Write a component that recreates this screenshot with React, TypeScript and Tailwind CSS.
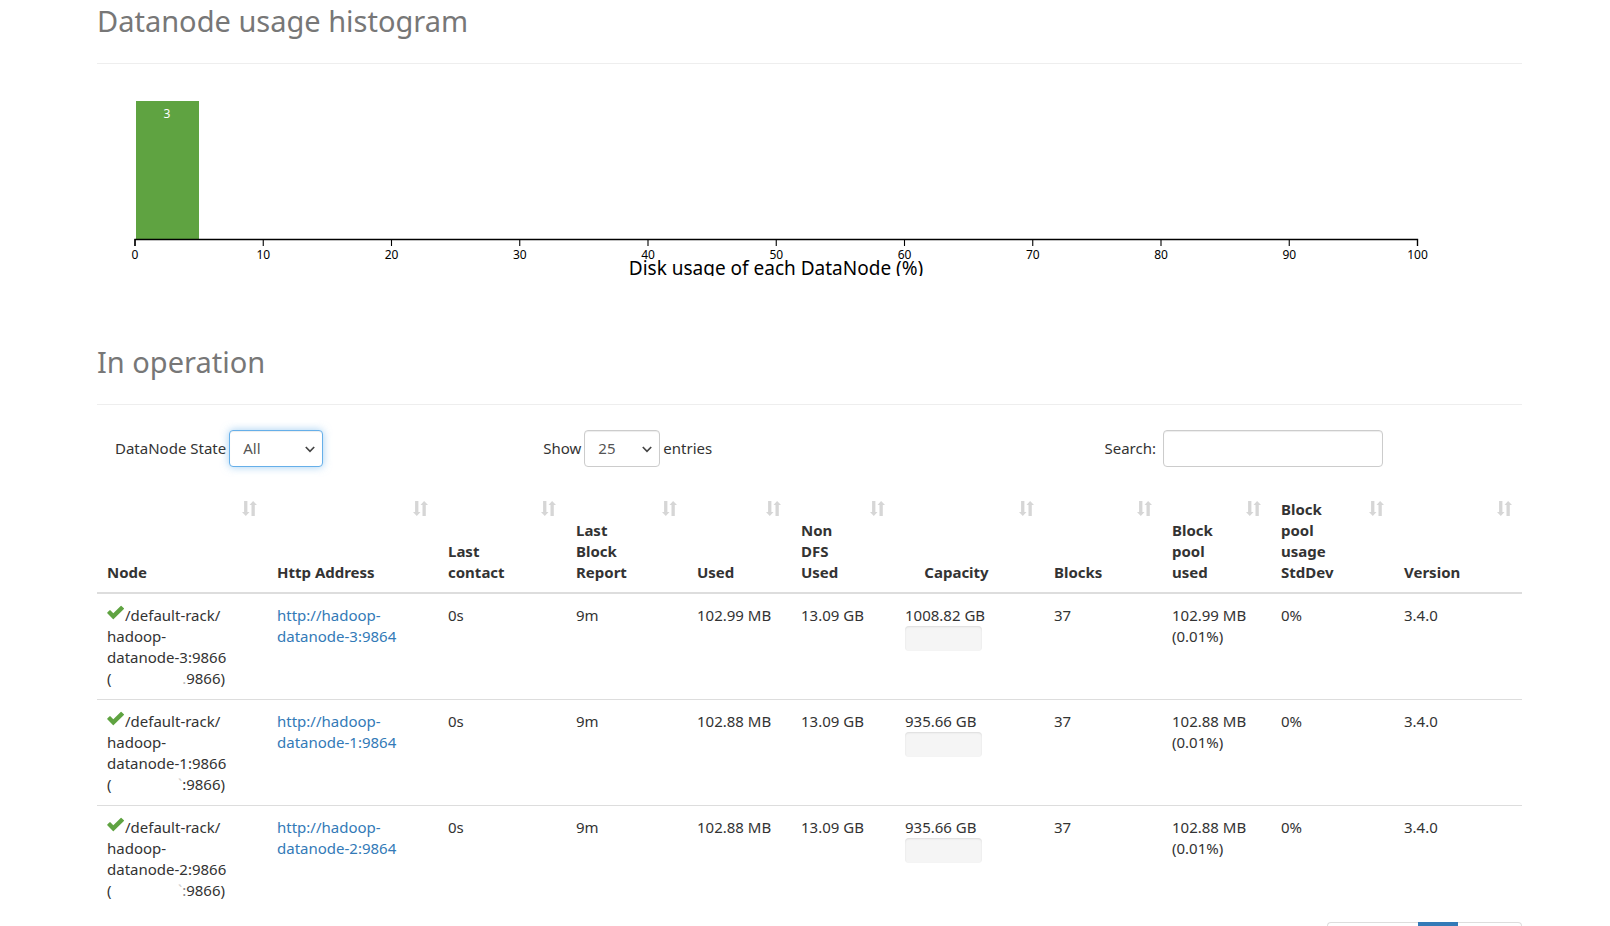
import React from "react";

const ticks = [0, 10, 20, 30, 40, 50, 60, 70, 80, 90, 100];

const columns = [
  { label: "Node", width: "w-[170px]" },
  { label: "Http Address", width: "w-[171px]" },
  { label: "Last contact", width: "w-[128px]" },
  { label: "Last Block Report", width: "w-[121px]" },
  { label: "Used", width: "w-[104px]" },
  { label: "Non DFS Used", width: "w-[104px]" },
  { label: "Capacity", width: "w-[149px]", center: true },
  { label: "Blocks", width: "w-[118px]" },
  { label: "Block pool used", width: "w-[109px]" },
  { label: "Block pool usage StdDev", width: "w-[123px]" },
  { label: "Version", width: "w-[128px]" },
];

const nodes = [
  { id: 3, used: "102.99 MB", capacity: "1008.82 GB", hint: "", sep: ".", sepColor: "text-[#bbbbbb]" },
  { id: 1, used: "102.88 MB", capacity: "935.66 GB", hint: "`", sep: ":", sepColor: "text-[#333333]" },
  { id: 2, used: "102.88 MB", capacity: "935.66 GB", hint: "`", sep: ":", sepColor: "text-[#888888]" },
];

function SortIcon() {
  return (
    <svg className="absolute top-[9px] right-[10px] h-[15px] w-[15px]" viewBox="0 0 15 15" fill="#d6d6d6" aria-hidden="true">
      <path d="M2.1 0h3.3v11h2.1L3.8 15 0 11h2.1zM9.5 15h3.3V4h2.2L11.1 0 7.5 4h2z" />
    </svg>
  );
}

function CheckIcon() {
  return (
    <svg className="-mt-[4px] mb-[4px] inline-block h-[15px] w-[18px]" viewBox="0 0 18 15" fill="#5fa341" aria-hidden="true">
      <path d="M0.3 8.3Q0 7.9 0.3 7.5L2.6 5.3Q3 5 3.4 5.3L6.3 8.2 13.7 0.9Q14.1 0.6 14.5 0.9L16.9 3.2Q17.2 3.6 16.9 4L6.7 14Q6.3 14.4 5.9 14z" />
    </svg>
  );
}

function Heading({ children }: { children: React.ReactNode }) {
  return (
    <h1 className="border-b border-[#eeeeee] pb-[26px] text-[29px] leading-[33px] text-[#777777]">{children}</h1>
  );
}

function Histogram() {
  return (
    <svg className="mt-[36px] block h-[176px] w-[1368px] overflow-hidden" viewBox="0 0 1368 176" role="img" aria-label="Disk usage of each DataNode">
      <rect x="39" y="1" width="63" height="138" fill="#5fa341" />
      <text x="70" y="18" textAnchor="middle" fontSize="12" fill="#ffffff">3</text>
      <path d="M38 146V139.5H1320.5V146" fill="none" stroke="#000000" strokeWidth="1.3" />
      {ticks.map((t) => (
        <g key={t}>
          <line x1={38 + t * 12.825} x2={38 + t * 12.825} y1="139" y2="146" stroke="#000000" strokeWidth="1.1" />
          <text x={38 + t * 12.825} y="159" textAnchor="middle" fontSize="12">{t}</text>
        </g>
      ))}
      <text x="679" y="175" textAnchor="middle" fontSize="19">Disk usage of each DataNode (%)</text>
    </svg>
  );
}

const field = "h-[37px] rounded border bg-white text-[15px] text-[#555555] outline-none";

function Chevron() {
  return (
    <svg className="pointer-events-none absolute top-[16px] right-[8px] h-[7px] w-[10px]" viewBox="0 0 10 7" fill="none" stroke="#444444" strokeWidth="1.7" aria-hidden="true">
      <path d="M0.8 1 5 5.3 9.2 1" />
    </svg>
  );
}

export default function App() {
  return (
    <main className="h-screen overflow-hidden bg-white pr-[88px] pl-[97px] font-['Noto_Sans',sans-serif] text-[15px] leading-[21px] text-[#333333]">
      <div className="pt-[4px]">
        <Heading>Datanode usage histogram</Heading>
      </div>
      <Histogram />
      <div className="mt-[69px]">
        <Heading>In operation</Heading>
      </div>

      <div className="mt-[25px] grid grid-cols-4 items-center">
        <div className="flex items-center gap-[3px] pl-[18px]">
          <label htmlFor="state">DataNode State</label>
          <span className="relative">
            <select id="state" className={`${field} w-[94px] appearance-none border-[#66afe9] pl-[13px] shadow-[inset_0_1px_1px_rgba(0,0,0,0.075),0_0_8px_rgba(102,175,233,0.6)]`}>
              <option>All</option>
            </select>
            <Chevron />
          </span>
        </div>
        <div className="flex items-center gap-[3px] pl-[90px]">
          <label htmlFor="length">Show</label>
          <span className="relative">
            <select id="length" className={`${field} w-[76px] appearance-none border-[#cccccc] pl-[13px] shadow-[inset_0_1px_1px_rgba(0,0,0,0.075)]`}>
              <option>25</option>
            </select>
            <Chevron />
          </span>
          <span>entries</span>
        </div>
        <div className="col-span-2 flex items-center gap-[7px] justify-self-end pr-[139px]">
          <label htmlFor="search">Search:</label>
          <input id="search" type="search" className={`${field} w-[220px] border-[#cccccc] px-[13px] shadow-[inset_0_1px_1px_rgba(0,0,0,0.075)]`} />
        </div>
      </div>

      <table className="mt-[25px] w-full table-fixed border-collapse text-left">
        <colgroup>
          {columns.map((c) => (
            <col key={c.label} className={c.width} />
          ))}
        </colgroup>
        <thead>
          <tr className="border-b-2 border-[#dddddd]">
            {columns.map((c) => (
              <th key={c.label} className={`relative pt-[7px] pb-[9px] pl-[10px] align-bottom font-bold ${c.center ? "pr-[36px] text-center" : "pr-[40px]"}`}>
                {c.label}
                <SortIcon />
              </th>
            ))}
          </tr>
        </thead>
        <tbody>
          {nodes.map((n) => (
            <tr key={n.id} className="h-[106px] border-b border-[#dddddd] align-top last:border-b-0 [&>td]:pt-[11px] [&>td]:pl-[10px]">
              <td>
                <CheckIcon />
                /default-rack/
                <br />
                hadoop-
                <br />
                datanode-{n.id}:9866
                <br />
                <span className="flex w-[118px] justify-between">
                  <span>(</span>
                  <span>
                    <span className="text-[#cccccc]">{n.hint}</span>
                    <span className={n.sepColor}>{n.sep}</span>
                    9866)
                  </span>
                </span>
              </td>
              <td>
                <a href={`http://hadoop-datanode-${n.id}:9864`} className="text-[#337ab7]">
                  http://hadoop-
                  <br />
                  datanode-{n.id}:9864
                </a>
              </td>
              <td>0s</td>
              <td>9m</td>
              <td>{n.used}</td>
              <td>13.09 GB</td>
              <td>
                {n.capacity}
                <div className="h-[25px] w-[77px] rounded bg-[#f5f5f5] shadow-[inset_0_1px_2px_rgba(0,0,0,0.1)]" />
              </td>
              <td>37</td>
              <td>
                {n.used}
                <br />
                (0.01%)
              </td>
              <td>0%</td>
              <td>3.4.0</td>
            </tr>
          ))}
        </tbody>
      </table>

      <nav aria-label="Pages" className="mt-[11px] flex justify-end">
        <a href="#previous" aria-label="Previous" className="h-[37px] w-[91px] rounded-l border border-r-0 border-[#dddddd]" />
        <a href="#1" aria-label="Page 1" className="h-[37px] w-[40px] bg-[#337ab7]" />
        <a href="#next" aria-label="Next" className="h-[37px] w-[64px] rounded-r border border-l-0 border-[#dddddd]" />
      </nav>
    </main>
  );
}
